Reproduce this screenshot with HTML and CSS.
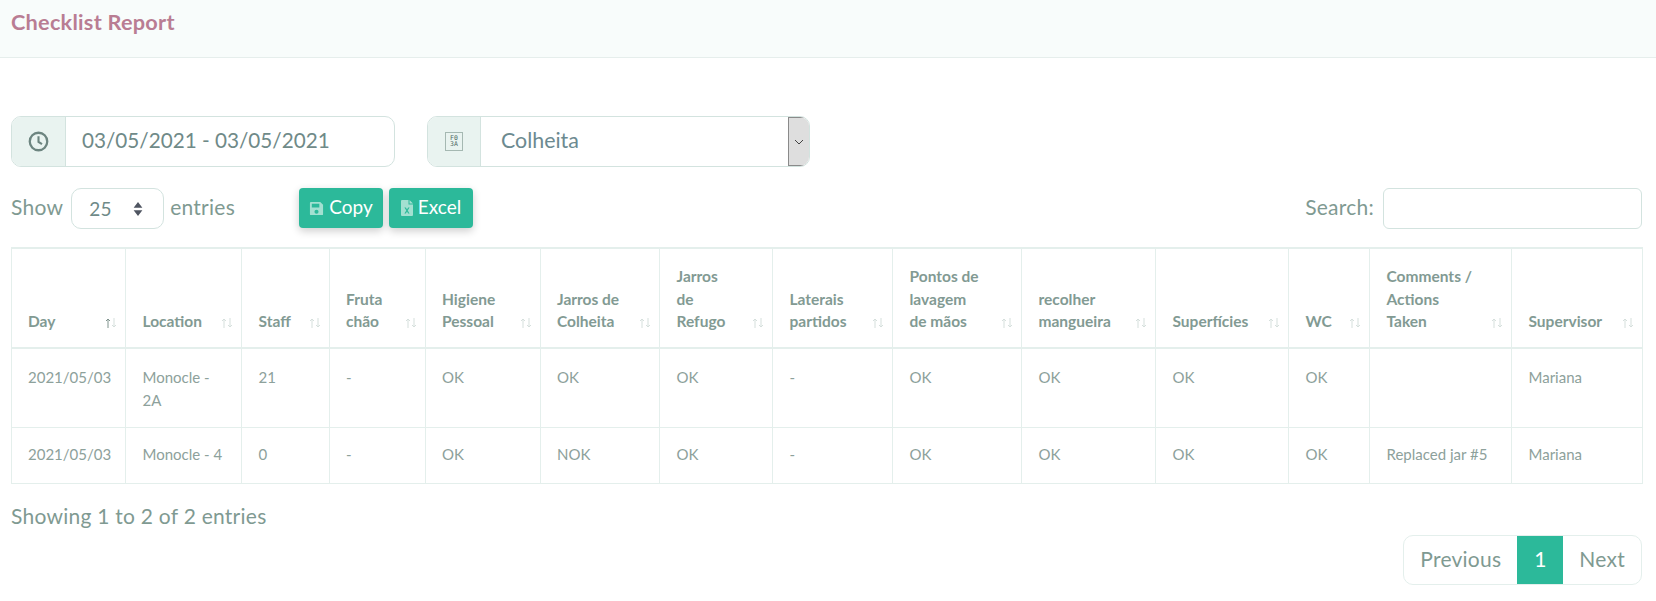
FILE: index.html
```html
<!DOCTYPE html>
<html lang="en">
<head>
    <meta charset="UTF-8">
    <meta name="viewport" content="width=device-width, initial-scale=1.0">
    <title>Checklist Report</title>
    <link rel="stylesheet" href="styles.css">
</head>
<body>
    <header class="topbar">
        <h1>Checklist Report</h1>
    </header>

    <main class="content">
        <div class="filters">
            <div class="input-group">
                <span class="addon">
                    <svg class="clock" viewBox="0 0 24 24" width="21" height="21">
                        <circle cx="12" cy="12" r="10" fill="none" stroke="currentColor" stroke-width="2.6"/>
                        <path d="M12 6v6.5l4 2.6" fill="none" stroke="currentColor" stroke-width="2.4"/>
                    </svg>
                </span>
                <span class="field">03/05/2021 - 03/05/2021</span>
            </div>
            <div class="input-group group-select">
                <span class="addon"><span class="tofu">F0<br>3A</span></span>
                <span class="field field-select">Colheita</span>
                <span class="select-btn">
                    <svg viewBox="0 0 10 6" width="10" height="6"><path d="M1 1l4 4 4-4" fill="none" stroke="#444" stroke-width="1"/></svg>
                </span>
            </div>
        </div>

        <div class="toolbar">
            <div class="length">
                <span class="lift">Show</span>
                <span class="length-select">
                    25
                    <svg viewBox="0 0 10 16" width="10" height="14"><path d="M5 0l5 6.5H0zM5 16l5-6.5H0z" fill="#4f5561"/></svg>
                </span>
                <span class="lift">entries</span>
            </div>
            <div class="buttons">
                <button class="btn">
                    <svg viewBox="0 0 16 16" width="15" height="15"><path class="btn-icon" d="M2 1h10l3 3v10a1 1 0 0 1-1 1H2a1 1 0 0 1-1-1V2a1 1 0 0 1 1-1zm1 2v4h8V3zm5 6.2a2.2 2.2 0 1 0 0 4.4 2.2 2.2 0 0 0 0-4.4z" fill-rule="evenodd"/></svg>
                    <span class="btn-label">Copy</span>
                </button>
                <button class="btn">
                    <svg viewBox="0 0 12 16" width="12" height="16"><path class="btn-icon" d="M1 0h6.5v4.5H12V15a1 1 0 0 1-1 1H1a1 1 0 0 1-1-1V1a1 1 0 0 1 1-1zm7.5 0L12 3.5H8.5zM3.4 7.5l1.9 3-1.9 3h1.5L6 11.6l1.1 1.9h1.5l-1.9-3 1.9-3H7.1L6 9.4 4.9 7.5z" fill-rule="evenodd"/></svg>
                    <span class="btn-label">Excel</span>
                </button>
            </div>
            <label class="search"><span class="lift">Search:</span> <input type="text"></label>
        </div>

        <table class="report">
            <colgroup>
                <col class="c-day"><col class="c-location"><col class="c-staff"><col class="c-fruta">
                <col class="c-higiene"><col class="c-colheita"><col class="c-refugo"><col class="c-laterais">
                <col class="c-lavagem"><col class="c-mangueira"><col class="c-superficies"><col class="c-wc">
                <col class="c-comments"><col class="c-supervisor">
            </colgroup>
            <thead>
                <tr>
                    <th class="sorted">Day</th>
                    <th>Location</th>
                    <th>Staff</th>
                    <th>Fruta<br>chão</th>
                    <th>Higiene<br>Pessoal</th>
                    <th>Jarros de<br>Colheita</th>
                    <th>Jarros<br>de<br>Refugo</th>
                    <th>Laterais<br>partidos</th>
                    <th>Pontos de<br>lavagem<br>de mãos</th>
                    <th>recolher<br>mangueira</th>
                    <th>Superfícies</th>
                    <th>WC</th>
                    <th>Comments /<br>Actions<br>Taken</th>
                    <th>Supervisor</th>
                </tr>
            </thead>
            <tbody>
                <tr>
                    <td>2021/05/03</td><td>Monocle -<br>2A</td><td>21</td><td>-</td><td>OK</td><td>OK</td><td>OK</td>
                    <td>-</td><td>OK</td><td>OK</td><td>OK</td><td>OK</td><td></td><td>Mariana</td>
                </tr>
                <tr>
                    <td>2021/05/03</td><td>Monocle - 4</td><td>0</td><td>-</td><td>OK</td><td>NOK</td><td>OK</td>
                    <td>-</td><td>OK</td><td>OK</td><td>OK</td><td>OK</td><td>Replaced jar #5</td><td>Mariana</td>
                </tr>
            </tbody>
        </table>

        <div class="info">Showing 1 to 2 of 2 entries</div>

        <div class="pager">
            <ul class="pagination">
                <li>Previous</li>
                <li class="active">1</li>
                <li>Next</li>
            </ul>
        </div>
    </main>

    <script>
        // sort arrows go in every header cell
        document.querySelectorAll(".report th").forEach(th => {
            let arrows = document.createElement("span");
            arrows.className = "sort-arrows";
            arrows.innerHTML = '<svg viewBox="0 0 12 10" width="12" height="10"><path class="up" d="M3 10V1M1 3l2-2 2 2"/><path class="down" d="M9 0v9M7 7l2 2 2-2"/></svg>';
            th.appendChild(arrows);
        });
    </script>
</body>
</html>
```

FILE: styles.css
```css
html, body {
    margin: 0;
    padding: 0;
}

body {
    font-family: 'Lato', 'Noto Sans', sans-serif;
    font-size: 21px;
    letter-spacing: 0.25px;
    color: #7f9a92;
    background: #fff;
}

.topbar {
    height: 57px;
    background: #f8fcfb;
    border-bottom: 1px solid #e6eeec;
    padding: 0 11px;
}

.topbar h1 {
    margin: 0;
    padding-top: 9px;
    font-size: 21.7px;
    line-height: 26px;
    font-weight: 700;
    color: #b97d93;
}

.content {
    padding: 0 14px 0 11px;
}

.filters {
    display: flex;
    gap: 32px;
    padding-top: 58px;
}

.input-group {
    display: flex;
    width: 384px;
    height: 51px;
    box-sizing: border-box;
    border: 1px solid #d3e3df;
    border-radius: 10px;
    overflow: hidden;
}

.group-select {
    width: 383px;
}

.addon {
    display: flex;
    align-items: center;
    justify-content: center;
    box-sizing: border-box;
    width: 54px;
    background: #e9f3f0;
    border-right: 1px solid #d3e3df;
    color: #6d8580;
}

.group-select .addon {
    width: 53px;
}

.field {
    flex: 1;
    display: flex;
    align-items: center;
    padding: 0 0 3px 16px;
    font-size: 20.7px;
    letter-spacing: 0;
    color: #6f8a88;
}

.field-select {
    padding-left: 20px;
    font-size: 21.4px;
    color: #6c8a90;
}

.tofu {
    box-sizing: border-box;
    width: 18px;
    height: 19px;
    border: 1px solid #a5b8b2;
    font-family: 'DejaVu Sans Mono', monospace;
    font-size: 6.5px;
    line-height: 6px;
    letter-spacing: 0;
    text-align: center;
    padding-top: 2px;
    color: #4f6a64;
}

.select-btn {
    display: flex;
    align-items: center;
    justify-content: center;
    width: 20px;
    background: #dedede;
    border-left: 1px solid #8a8a8a;
    border-top: 1px solid #8a8a8a;
    border-bottom: 1px solid #8a8a8a;
}

.lift {
    padding-bottom: 5px;
}

.btn-label {
    padding-bottom: 4px;
}

.toolbar {
    display: flex;
    align-items: center;
    margin-top: 21px;
    height: 41px;
}

.length {
    display: flex;
    align-items: center;
    gap: 6px;
    width: 288px;
}

.length-select {
    display: flex;
    align-items: center;
    justify-content: space-between;
    box-sizing: border-box;
    width: 93px;
    height: 41px;
    margin-left: 2px;
    padding: 0 20px 0 17px;
    border: 1px solid #d3e3df;
    border-radius: 10px;
    font-size: 19px;
    color: #6f8a88;
}

.buttons {
    display: flex;
    gap: 6px;
    margin-bottom: 1px;
}

.btn {
    display: flex;
    align-items: center;
    justify-content: center;
    gap: 5px;
    width: 84px;
    height: 40px;
    padding: 0;
    border: none;
    border-radius: 4px;
    background: #2cb99a;
    color: #fff;
    font-family: inherit;
    font-size: 19px;
    letter-spacing: 0;
    box-shadow: 0 3px 8px rgba(0, 0, 0, 0.2);
}

.btn-icon {
    fill: #a3e0d1;
}

.search {
    display: flex;
    align-items: center;
    gap: 9px;
    margin-left: auto;
}

.search input {
    box-sizing: border-box;
    width: 259px;
    height: 41px;
    border: 1px solid #d3e3df;
    border-radius: 6px;
}

.report {
    table-layout: fixed;
    width: 1631px;
    margin-top: 18px;
    border-collapse: collapse;
    border: 1px solid #e4efec;
    border-top-width: 2px;
    font-size: 15px;
    letter-spacing: 0;
    line-height: 23px;
}

.c-day { width: 114px; }
.c-location { width: 116px; }
.c-staff { width: 87.5px; }
.c-fruta { width: 96px; }
.c-higiene { width: 115px; }
.c-colheita { width: 119.5px; }
.c-refugo { width: 113px; }
.c-laterais { width: 120px; }
.c-lavagem { width: 129px; }
.c-mangueira { width: 134px; }
.c-superficies { width: 133px; }
.c-wc { width: 81px; }
.c-comments { width: 142px; }
.c-supervisor { width: 131px; }

.report th, .report td {
    border: 1px solid #e4efec;
    padding: 17px 14px 15px 16.5px;
    text-align: left;
    vertical-align: top;
}

.report tbody tr + tr td {
    padding-top: 15px;
    padding-bottom: 17px;
}

.report th {
    position: relative;
    vertical-align: bottom;
    padding: 16px 10px 14px 16.5px;
    border-bottom-width: 2px;
    font-size: 15.5px;
    font-weight: 700;
    line-height: 22.5px;
    color: #829a93;
}

.report td {
    color: #8da19b;
}

.report th:first-child, .report td:first-child {
    padding-left: 16px;
}

.sort-arrows {
    position: absolute;
    right: 8px;
    bottom: 19px;
    line-height: 0;
}

.sort-arrows path {
    fill: none;
    stroke-width: 1;
    stroke: #d5dfdc;
}

.sorted .sort-arrows .up {
    stroke: #7f938d;
}

.info {
    margin-top: 19px;
    line-height: 26px;
}

.pager {
    display: flex;
    justify-content: flex-end;
    margin-top: 6px;
}

.pagination {
    display: flex;
    height: 50px;
    box-sizing: border-box;
    margin: 0;
    padding: 0;
    list-style: none;
    border: 1px solid #e4efec;
    border-radius: 10px;
    overflow: hidden;
}

.pagination li {
    display: flex;
    align-items: center;
    padding: 0 16px 2px;
}

.pagination .active {
    width: 46px;
    box-sizing: border-box;
    justify-content: center;
    background: #2cb99a;
    color: #fff;
}
```
